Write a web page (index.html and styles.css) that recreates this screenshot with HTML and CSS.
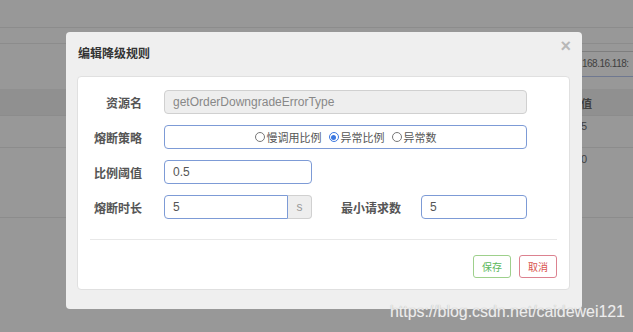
FILE: index.html
```html
<!DOCTYPE html>
<html lang="zh-CN">
<head>
    <meta charset="UTF-8">
    <title>编辑降级规则</title>
    <link rel="stylesheet" href="styles.css">
</head>
<body>
    <div class="page">
        <div class="row row-a"></div>
        <div class="row row-b"></div>
        <div class="row row-c"><div class="cell-right"><span class="ip-box">168.16.118:</span></div></div>
        <div class="row row-head"><div class="cell-right">值</div></div>
        <div class="row row-e"><div class="cell-right">5</div></div>
        <div class="row row-f"><div class="cell-right">0</div></div>
    </div>

    <div class="modal">
        <div class="modal-header">
            <h4 class="modal-title">编辑降级规则</h4>
            <span class="close">×</span>
        </div>
        <div class="panel">
            <div class="form-row">
                <label class="control-label">资源名</label>
                <div class="field">
                    <input class="form-input disabled wide" type="text" value="getOrderDowngradeErrorType" disabled>
                </div>
            </div>
            <div class="form-row">
                <label class="control-label">熔断策略</label>
                <div class="field">
                    <div class="form-input wide radio-box">
                        <span class="radio"><span class="dot"></span>慢调用比例</span>
                        <span class="radio"><span class="dot checked"></span>异常比例</span>
                        <span class="radio"><span class="dot"></span>异常数</span>
                    </div>
                </div>
            </div>
            <div class="form-row">
                <label class="control-label">比例阈值</label>
                <div class="field">
                    <input class="form-input short" type="text" value="0.5">
                </div>
            </div>
            <div class="form-row">
                <label class="control-label">熔断时长</label>
                <div class="field">
                    <div class="input-group">
                        <input class="form-input grouped" type="text" value="5">
                        <span class="addon">s</span>
                    </div>
                    <label class="control-label inline-label">最小请求数</label>
                    <input class="form-input small" type="text" value="5">
                </div>
            </div>
            <div class="divider"></div>
            <div class="buttons">
                <button class="btn btn-save">保存</button>
                <button class="btn btn-cancel">取消</button>
            </div>
        </div>
    </div>

    <div class="watermark">https://blog.csdn.net/caidewei121</div>
</body>
</html>
```

FILE: styles.css
```css
html, body {
    margin: 0;
    height: 100%;
}
body {
    background-color: #989898;
    font-family: "Liberation Sans", Arial, "Noto Sans CJK SC", sans-serif;
    font-size: 12px;
    position: relative;
    overflow: hidden;
}
.row {
    box-sizing: border-box;
    border-bottom: 1px solid #8c8c8c;
    position: relative;
}
.row-a { height: 28px; }
.row-b { height: 16px; }
.row-c { height: 45px; border-bottom: none; }
.row-head { height: 27px; background-color: #909090; }
.row-e { height: 32px; }
.row-f { height: 70px; }
.cell-right {
    margin-left: 581px;
    color: #3f3f3f;
    font-size: 11px;
}
.row-head .cell-right { padding-top: 6px; font-weight: bold; }
.row-e .cell-right { padding-top: 4px; }
.row-f .cell-right { padding-top: 5px; }
.row-c .cell-right {
    padding-top: 7px;
}
.ip-box {
    display: block;
    height: 24px;
    line-height: 24px;
    font-size: 10px;
    letter-spacing: -0.5px;
    border-top: 1px solid #7e7e7e;
    border-bottom: 1px solid #6f7890;
    padding-left: 1px;
    white-space: nowrap;
}

.modal {
    position: absolute;
    left: 66px;
    top: 32px;
    width: 516px;
    height: 277px;
    box-sizing: border-box;
    background-color: #efefef;
    border-radius: 4px;
    padding: 14px 12px 20px 11px;
}
.modal-header {
    display: flex;
    justify-content: space-between;
    height: 30px;
}
.modal-title {
    margin: 0;
    font-family: "Noto Sans CJK SC", sans-serif;
    font-size: 12px;
    line-height: 14px;
    color: #333;
    font-weight: bold;
    padding-left: 1px;
}
.close {
    color: #b8b8b8;
    font-size: 18px;
    font-weight: bold;
    line-height: 14px;
    margin-top: -7px;
    margin-right: -1px;
}
.panel {
    background-color: #fff;
    border: 1px solid #e0e0e0;
    border-radius: 4px;
    padding: 13px 12px 11px 12px;
}
.form-row {
    display: flex;
    align-items: center;
    height: 24px;
    margin-bottom: 11px;
}
.form-row:nth-child(4) { margin-bottom: 0; }
.control-label {
    width: 52px;
    flex: none;
    text-align: right;
    white-space: nowrap;
    direction: rtl;
    font-family: "Noto Sans CJK SC", sans-serif;
    font-weight: bold;
    font-size: 12px;
    color: #555;
}
.field {
    margin-left: 22px;
    display: flex;
    align-items: center;
}
.form-input {
    box-sizing: border-box;
    height: 24px;
    border: 1px solid #7d9bd6;
    border-radius: 4px;
    padding: 0 8px;
    font-family: "Liberation Sans", Arial, sans-serif;
    font-size: 12px;
    color: #555;
    background-color: #fff;
    outline: none;
}
.disabled {
    background-color: #eee;
    border-color: #d0d0d0;
    color: #888;
}
.wide { width: 363px; }
.short { width: 148px; }
.small { width: 106px; }
.radio-box {
    display: flex;
    justify-content: center;
    align-items: center;
    gap: 7px;
    font-family: "Noto Sans CJK SC", sans-serif;
    font-size: 11px;
    color: #555;
}
.radio {
    display: flex;
    align-items: center;
}
.dot {
    width: 10px;
    height: 10px;
    border: 1px solid #777;
    border-radius: 50%;
    margin-right: 2px;
    box-sizing: border-box;
    position: relative;
}
.dot.checked {
    border-color: #3c78e0;
}
.dot.checked::after {
    content: "";
    position: absolute;
    left: 1.5px;
    top: 1.5px;
    width: 5px;
    height: 5px;
    border-radius: 50%;
    background-color: #3c78e0;
}
.input-group {
    display: flex;
    width: 148px;
}
.grouped {
    width: 124px;
    border-radius: 4px 0 0 4px;
}
.addon {
    box-sizing: border-box;
    width: 24px;
    height: 24px;
    line-height: 22px;
    text-align: center;
    background-color: #eee;
    border: 1px solid #d0d0d0;
    border-left: none;
    border-radius: 0 4px 4px 0;
    color: #999;
}
.inline-label {
    width: 58px;
    margin-left: 29px;
    margin-right: 22px;
    text-align: left;
    direction: ltr;
}
.divider {
    height: 1px;
    background-color: #e8e8e8;
    margin-top: 20px;
}
.buttons {
    display: flex;
    justify-content: flex-end;
    gap: 8px;
    margin-top: 15px;
}
.btn {
    box-sizing: border-box;
    width: 38px;
    height: 23px;
    background-color: #fff;
    border-radius: 3px;
    font-family: "Noto Sans CJK SC", sans-serif;
    font-size: 10px;
    padding: 0;
}
.btn-save {
    border: 1px solid #9ed08c;
    color: #5cb85c;
}
.btn-cancel {
    border: 1px solid #dc8290;
    color: #d9534f;
}
.watermark {
    position: absolute;
    left: 390px;
    top: 303px;
    font-family: "Liberation Sans", Arial, sans-serif;
    font-size: 16px;
    letter-spacing: -0.05px;
    color: #ededed;
    text-shadow: 0 0 1px #aaa;
    white-space: nowrap;
}
```
